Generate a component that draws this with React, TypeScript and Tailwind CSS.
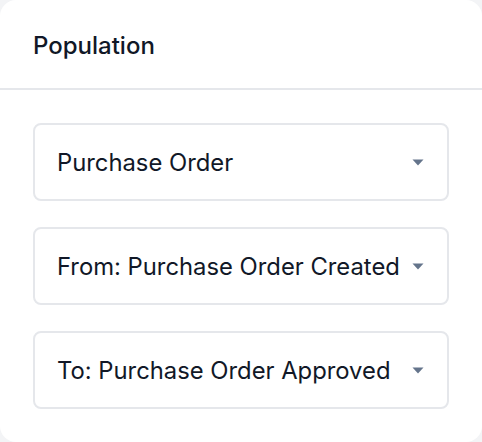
import React from "react";

function Caret() {
  return (
    <svg width="12" height="7" viewBox="0 0 12 7" className="shrink-0">
      <path d="M0.5 0.5 L11.5 0.5 L6 6.5 Z" fill="#64748b" />
    </svg>
  );
}

function SelectBox({ label }: { label: string }) {
  return (
    <div className="flex h-[78px] items-center justify-between rounded-lg border-2 border-[#e5e7eb] bg-white pl-[22px] pr-[23px]">
      <span className="pt-[1px] text-[23.8px] leading-8 text-[#111827]">{label}</span>
      <Caret />
    </div>
  );
}

export default function App() {
  return (
    <div
      className="h-[442px] w-[482px] bg-[#f3f4f6]"
      style={{ fontFamily: "Inter, 'Noto Sans', sans-serif" }}
    >
      <div className="flex h-[442px] w-[482px] flex-col rounded-2xl bg-white">
        <div className="flex h-[90px] items-center border-b-2 border-[#e5e7eb] px-[33px] pt-[4px]">
          <span className="text-[24px] font-medium text-[#111827]">Population</span>
        </div>
        <div className="flex flex-col gap-[26px] px-[33px] pt-[33px]">
          <SelectBox label="Purchase Order" />
          <SelectBox label="From: Purchase Order Created" />
          <SelectBox label="To: Purchase Order Approved" />
        </div>
      </div>
    </div>
  );
}
